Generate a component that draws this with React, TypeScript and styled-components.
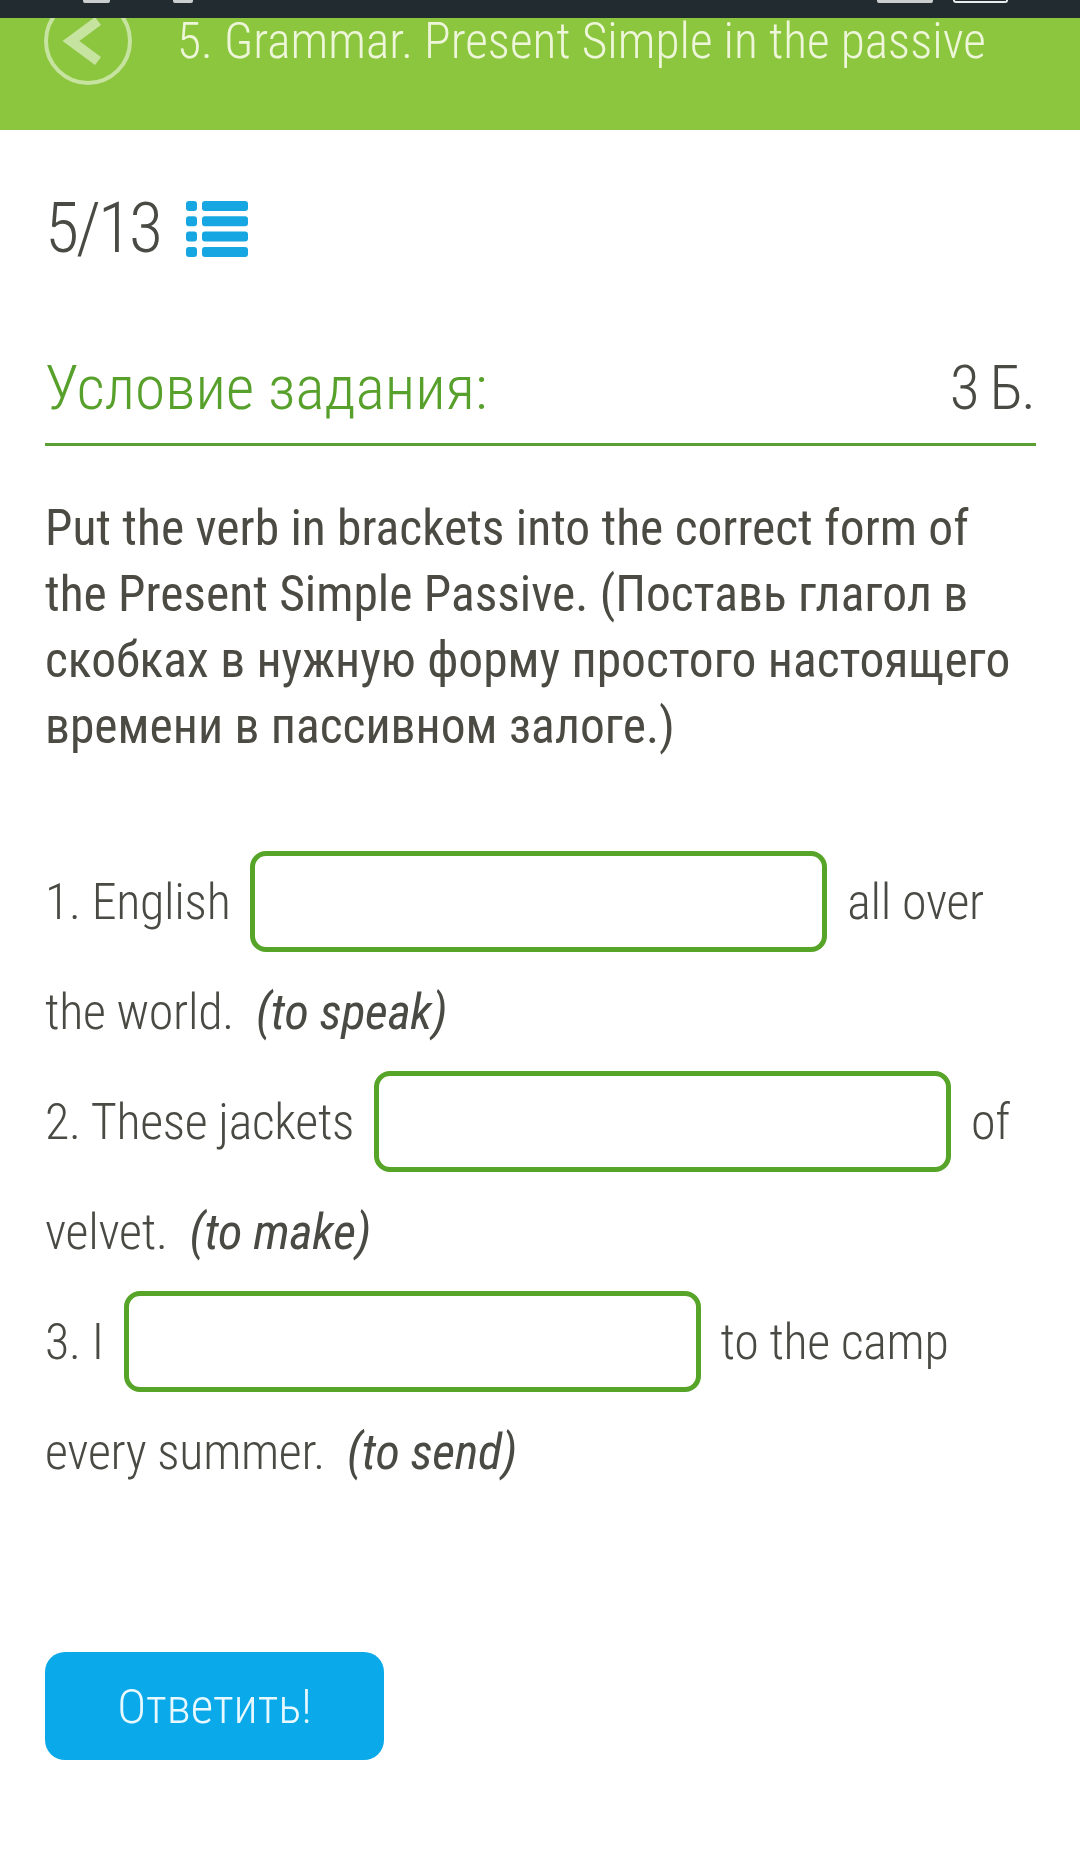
import styled, { createGlobalStyle } from "styled-components";

const GlobalStyle = createGlobalStyle`
  body {
    margin: 0;
    background: #ffffff;
    font-family: "Roboto Condensed", Roboto, "Liberation Sans", sans-serif;
    font-stretch: condensed;
  }
  * { box-sizing: border-box; }
`;

export default function App() {
  return (
    <>
      <GlobalStyle />
      <StatusBar>
        <StatusGroup>
          <StatusMark $w={27} />
          <StatusMark $w={20} />
        </StatusGroup>
        <StatusGroup>
          <StatusMark $w={56} />
          <Battery />
        </StatusGroup>
      </StatusBar>

      <Header>
        <HeaderRow>
          <BackButton>
            <svg width="80" height="80" viewBox="4 4 80 80">
              <polyline
                points="54,24 27,44 54,64"
                fill="none"
                stroke="rgba(255,255,255,0.5)"
                strokeWidth="10"
              />
            </svg>
          </BackButton>
          <HeaderTitle>5. Grammar. Present Simple in the passive</HeaderTitle>
        </HeaderRow>
      </Header>

      <Main>
        <Counter>
          <CounterText>5/13</CounterText>
          <svg width="62" height="57" viewBox="0 0 62 57">
            {[1, 16.3, 31.6, 47].map((y) => (
              <g key={y} fill="#16a6e2">
                <rect x="0" y={y} width="11" height="10" rx="3" />
                <rect x="16" y={y} width="46" height="10" rx="3" />
              </g>
            ))}
          </svg>
        </Counter>

        <TaskHead>
          <TaskLabel>Условие задания:</TaskLabel>
          <Points>3 Б.</Points>
        </TaskHead>

        <Instruction>
          Put the verb in brackets into the correct form of<br />
          the Present Simple Passive. (Поставь глагол в<br />
          скобках в нужную форму простого настоящего<br />
          времени в пассивном залоге.)
        </Instruction>

        <Exercise>
          1. English <Blank type="text" /> all over<br />
          the world. <Hint>(to speak)</Hint><br />
          2. These jackets <Blank type="text" /> of<br />
          velvet. <Hint>(to make)</Hint><br />
          3. I <Blank type="text" /> to the camp<br />
          every summer. <Hint>(to send)</Hint>
        </Exercise>

        <SubmitButton type="button">Ответить!</SubmitButton>
      </Main>
    </>
  );
}

// status bar sits over the header so the back circle tucks under it
const StatusBar = styled.div`
  position: relative;
  z-index: 2;
  height: 18px;
  background: #222b30;
  display: flex;
  justify-content: space-between;
  align-items: flex-start;
  padding: 0 72px 0 83px;
`;

const StatusGroup = styled.div`
  display: flex;
  gap: 20px;
  &:first-child { gap: 63px; }
`;

const StatusMark = styled.span<{ $w: number }>`
  display: block;
  width: ${(p) => p.$w}px;
  height: 3px;
  background: #e9ecec;
  border-radius: 0 0 2px 2px;
  opacity: 0.85;
`;

const Battery = styled.span`
  display: block;
  width: 55px;
  height: 3px;
  border: 2px solid #e9ecec;
  border-top: none;
  border-radius: 0 0 6px 6px;
`;

const Header = styled.header`
  height: 112px;
  background: #8cc63f;
  display: flex;
  align-items: flex-start;
`;

const HeaderRow = styled.div`
  margin-top: -21px;
  height: 88px;
  display: flex;
  align-items: center;
  gap: 45px;
  padding-left: 44px;
`;

const BackButton = styled.span`
  width: 88px;
  height: 88px;
  border-radius: 50%;
  border: 4px solid rgba(255, 255, 255, 0.5);
  display: flex;
  align-items: center;
  justify-content: center;
  flex-shrink: 0;
`;

const HeaderTitle = styled.h1`
  margin: 0;
  font-size: 49.4px;
  line-height: 40px;
  font-weight: 300;
  color: #eef6da;
  white-space: nowrap;
`;

const Main = styled.main`
  padding: 0 44px 0 45px;
`;

const Counter = styled.div`
  margin-top: 56px;
  height: 84px;
  display: flex;
  align-items: center;
  gap: 26px;
`;

const CounterText = styled.span`
  font-size: 70px;
  line-height: 84px;
  font-weight: 300;
  letter-spacing: -3px;
  color: #4a4a44;
`;

const TaskHead = styled.div`
  margin-top: 82px;
  display: flex;
  justify-content: space-between;
  align-items: baseline;
  padding-bottom: 19px;
  border-bottom: 3px solid #5c9f34;
  font-size: 61.6px;
  line-height: 72px;
  font-weight: 300;
`;

const TaskLabel = styled.span`
  color: #58a02c;
`;

const Points = styled.span`
  color: #4a4a44;
  letter-spacing: -2px;
  margin-right: 2px;
`;

const Instruction = styled.p`
  margin: 49px 0 0;
  font-size: 49.5px;
  line-height: 66px;
  font-weight: 400;
  color: #4b4b43;
  white-space: nowrap;
`;

const Exercise = styled.div`
  margin-top: 88px;
  font-size: 50px;
  line-height: 110px;
  font-weight: 300;
  letter-spacing: -0.3px;
  color: #4a4a44;
  white-space: nowrap;
`;

const Blank = styled.input`
  width: 577px;
  height: 101px;
  margin: -8px 9px 0;
  vertical-align: middle;
  border: 5px solid #56a528;
  border-radius: 16px;
  background: #ffffff;
  outline: none;
  font: inherit;
`;

const Hint = styled.em`
  font-style: italic;
  font-weight: 400;
  margin-left: 11px;
  color: #4a4a44;
`;

const SubmitButton = styled.button`
  display: block;
  margin-top: 145px;
  width: 339px;
  height: 108px;
  border: none;
  border-radius: 20px;
  background: #0aa9ea;
  color: #e8f8ff;
  font-family: inherit;
  font-stretch: inherit;
  font-size: 49px;
  font-weight: 300;
  cursor: pointer;
`;
